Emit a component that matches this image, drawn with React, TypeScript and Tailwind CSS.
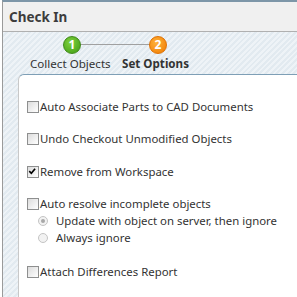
import React from "react";

const stripes =
  "bg-[repeating-linear-gradient(135deg,#eef3f7_0px,#eef3f7_2px,#e2eaf0_2px,#e2eaf0_4px)]";

function Box({ checked = false }: { checked?: boolean }) {
  return (
    <span className="relative inline-block w-[12px] h-[12px] border border-[#8e8f8f] bg-[linear-gradient(135deg,#dcdcdc,#ffffff)] shrink-0">
      {checked && (
        <svg viewBox="0 0 12 12" className="absolute left-0 top-0 w-[10px] h-[10px]">
          <path d="M1.5 5 L4 7.5 L8.5 2" stroke="#000" strokeWidth="2" fill="none" />
        </svg>
      )}
    </span>
  );
}

function Radio({ checked = false }: { checked?: boolean }) {
  return (
    <span className="relative inline-flex items-center justify-center w-[10px] h-[10px] rounded-full border border-[#c4c4c4] bg-[#f2f2f2] shrink-0">
      {checked && <span className="w-[4px] h-[4px] rounded-full bg-[#a8a8a8]" />}
    </span>
  );
}

function CheckRow({ label, checked }: { label: string; checked?: boolean }) {
  return (
    <div className="flex items-center gap-[1px] h-[16px] whitespace-nowrap">
      <Box checked={checked} />
      <span>{label}</span>
    </div>
  );
}

export default function App() {
  return (
    <div
      className="w-[297px] h-[297px] overflow-hidden bg-white text-[11.4px] text-[#333] leading-none"
      style={{ fontFamily: '"Noto Sans", "Open Sans", sans-serif' }}
    >
      <div className="h-full border-t-2 border-t-[#7d96a8] border-l border-l-[#9a9a9a] ml-[2px] flex flex-col">
        <div className="h-[30px] bg-[#f0f0f0] border-b border-b-[#b0b0b0] flex items-center pl-[6px] pt-[2px] font-bold text-[13.5px] text-[#3c3c3c]">
          Check In
        </div>
        <div className={`flex-1 flex flex-col ${stripes}`}>
          <div className="h-[42px] relative">
            <div className="absolute left-[69px] top-[12px] w-[86px] h-[1px] bg-[#a0a0a0]" />
            <div className="absolute left-[60px] top-[4px] w-[18px] h-[18px] rounded-full bg-[radial-gradient(circle_at_40%_35%,#7fd23f,#3e9a12)] border border-[#3f8a1a] flex items-center justify-center text-white text-[12px] font-bold">
              1
            </div>
            <div className="absolute left-[146px] top-[4px] w-[18px] h-[18px] rounded-full bg-[radial-gradient(circle_at_40%_35%,#ffb23a,#ef7a00)] border border-[#e07000] flex items-center justify-center text-white text-[12px] font-bold">
              2
            </div>
            <div className="absolute left-[27px] top-[26px] text-[11.6px] text-[#333] whitespace-nowrap">Collect Objects</div>
            <div className="absolute left-[119px] top-[26px] text-[11.6px] font-bold text-[#333] whitespace-nowrap">Set Options</div>
          </div>
          <div className="flex-1 ml-[15px] bg-white rounded-tl-[6px] border-l border-t border-l-[#c8c8c8] border-t-[#7e9fb6] pl-[8px] pt-[24px] flex flex-col">
            <CheckRow label="Auto Associate Parts to CAD Documents" />
            <div className="h-[16px]" />
            <CheckRow label="Undo Checkout Unmodified Objects" />
            <div className="h-[17px]" />
            <CheckRow label="Remove from Workspace" checked />
            <div className="h-[16px]" />
            <CheckRow label="Auto resolve incomplete objects" />
            <div className="flex items-center gap-[8px] h-[17px] pl-[11px] whitespace-nowrap">
              <Radio checked />
              <span>Update with object on server, then ignore</span>
            </div>
            <div className="flex items-center gap-[8px] h-[17px] pl-[11px] whitespace-nowrap">
              <Radio />
              <span>Always ignore</span>
            </div>
            <div className="h-[18px]" />
            <CheckRow label="Attach Differences Report" />
          </div>
        </div>
      </div>
    </div>
  );
}
